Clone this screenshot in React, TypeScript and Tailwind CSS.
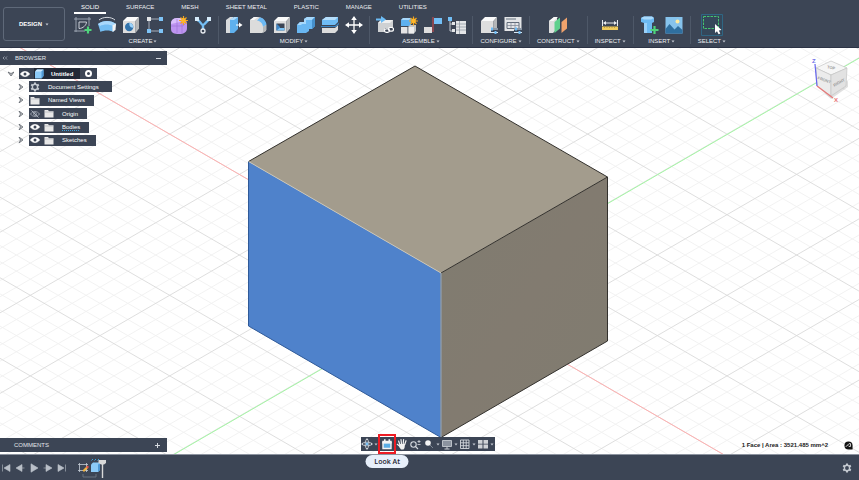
import React from 'react';

const TABS = ['SOLID', 'SURFACE', 'MESH', 'SHEET METAL', 'PLASTIC', 'MANAGE', 'UTILITIES'];

function Svg({ children, className = 'w-[18px] h-[18px]', box = '0 0 18 18' }: { children: React.ReactNode; className?: string; box?: string }) {
  return (
    <svg viewBox={box} className={`shrink-0 ${className}`} fill="none" aria-hidden="true">
      {children}
    </svg>
  );
}

function Caret() {
  return (
    <Svg box="0 0 4 3" className="w-[4px] h-[3px]">
      <path d="M0.5 0.5h3L2 2.5z" fill="#c5cad3" />
    </Svg>
  );
}

/* ── Toolbar icons ── */

const SketchIcon = () => (
  <Svg>
    <path d="M2 1v15M15 1v9M0 3h17M0 15h11" stroke="#9aa3b0" strokeWidth="1" />
    <path d="M5 12.500V6h7.500C12.500 9 9 12.500 5 12.500z" stroke="#c9ced6" strokeWidth="1" />
    <path d="M14 10.500v7M10.500 14h7" stroke="#4fd57c" strokeWidth="2.200" />
  </Svg>
);

const FormIcon = () => (
  <Svg>
    <path d="M1 4C5 .5 13 .5 17 4" stroke="#d5d9df" strokeWidth="1" />
    <path d="M0 8c5-4 13-4 18 0l-2.500 8c-3-2-10-2-13 0z" fill="#74bdf2" />
    <path d="M0 8c5-4 13-4 18 0l-3 2C11 8 6 8 2 10z" fill="#a9d8fb" />
    <path d="M18 7.500l-3.500 2V16l3-2z" fill="#f3f3f3" />
  </Svg>
);

const BoxBase = () => (
  <>
    <path d="M1 5l4-4h12l-3.500 4z" fill="#fafafa" />
    <path d="M1 5h12.500v12H1z" fill="#dedede" />
    <path d="M13.500 5L17 1v11.500L13.500 17z" fill="#b4b6b8" />
  </>
);

const HoleIcon = () => (
  <Svg>
    <BoxBase />
    <circle cx="7.200" cy="11" r="4.200" fill="#3273ab" />
    <path d="M7.500 6.800a4.200 4.200 0 0 1 3.800 4.800c-3 .4-4.400-2-3.800-4.800z" fill="#9cd3fb" />
  </Svg>
);

const PatternIcon = () => (
  <Svg>
    <path d="M5 3h9M3 5v10h10" stroke="#a7afbb" strokeWidth="1" />
    <path d="M1 1h4v4H1z" fill="#e4e6e9" />
    <path d="M13 1h4v4h-4zM1 13h4v4H1zM13 13h4v4h-4z" fill="#7ec4f7" />
  </Svg>
);

const Spark = ({ x, y }: { x: number; y: number }) => (
  <g transform={`translate(${x} ${y})`}>
    <path d="M0-4.500V4.500M-4.500 0H4.500M-3-3L3 3M3-3L-3 3" stroke="#f3a41c" strokeWidth="1.200" />
    <circle r="2.400" fill="#fdb62a" />
  </g>
);

const MeshFormIcon = () => (
  <Svg>
    <path d="M1 8C1 3 4 2 9 2s8 2 8 6v4c0 4-3 6-8 6s-8-1-8-5z" fill="#bd94f0" />
    <path d="M1 8C1 3 4 2 9 2h4l-3 4z" fill="#d9bffb" />
    <path d="M7 3v14M1 10h12l3-3M12 6v11" stroke="#9a6fd3" strokeWidth=".6" />
    <Spark x={13.500} y={4.500} />
  </Svg>
);

const BranchIcon = () => (
  <Svg>
    <path d="M3 4c3 0 4 5 6 5s4-5 6-5M9 9v6" stroke="#74bdf2" strokeWidth="2.400" />
    <path d="M1 1h4v4H1zM13 1h4v4h-4z" fill="#d6ebfa" />
    <circle cx="9" cy="15" r="2" fill="#3c4555" stroke="#e9edf2" strokeWidth="1.300" />
  </Svg>
);

const PressPullIcon = () => (
  <Svg>
    <path d="M1 4l4-3h3v13l-3 3H1z" fill="#d9dbdd" />
    <path d="M5 4l4-3h4v12l-4 4H5z" fill="#5fb1ee" />
    <path d="M5 4l4-3h4l-4 3z" fill="#b0dcfb" />
    <path d="M11 9h4" stroke="#fff" strokeWidth="1" />
    <path d="M14 6.500L17.500 9 14 11.500z" fill="#fff" />
  </Svg>
);

const FilletIcon = () => (
  <Svg>
    <path d="M1 4l4-3h4c4 0 8 4 8 9v5l-4 2H1z" fill="#dcdcdc" />
    <path d="M1 4l4-3h4L5 4z" fill="#f8f8f8" />
    <path d="M8 4.500L11 1.500c3.500.5 6 3.500 6.500 7L14 11c0-3-2.500-6-6-6.500z" fill="#6cb9f3" />
    <path d="M14 11l3.500-2.500V14L14 17z" fill="#b4b6b8" />
  </Svg>
);

const ShellIcon = () => (
  <Svg>
    <BoxBase />
    <path d="M3.500 7.500h8v7h-8z" fill="#3c4555" />
    <path d="M3.500 14.500v-7L7 11v1.500z" fill="#3f86c6" />
    <path d="M3.500 14.500L6.500 12h5v2.500z" fill="#7cc3f6" />
  </Svg>
);

const CombineIcon = () => (
  <Svg>
    <path d="M0 9l3-3h4V3l3-2h8v9l-3 3h-3v2l-3 2H0z" fill="#69b7f2" />
    <path d="M0 9l3-3h4V3l3-2h8l-3 3H9v4H5L4 9z" fill="#a6d8fc" />
    <path d="M15 4l3-3v9l-3 3z" fill="#458fcb" />
  </Svg>
);

const SplitIcon = () => (
  <Svg>
    <path d="M1 4l4-3h12v5l-3 3H1z" fill="#6fbcf5" />
    <path d="M1 4l4-3h12l-3 3z" fill="#b5defc" />
    <path d="M1 12h13l3-3v5l-3 3H1z" fill="#dcdcdc" />
    <path d="M0 10.500h14.500L18 7.500" stroke="#3a82c0" strokeWidth="1.200" />
  </Svg>
);

const MoveIcon = () => (
  <Svg>
    <path d="M9 2v14M2 9h14" stroke="#fff" strokeWidth="1.300" />
    <path d="M9 0l2.800 4H6.200zM9 18l2.800-4H6.200zM0 9l4-2.800v5.600zM18 9l-4-2.800v5.600z" fill="#fff" />
  </Svg>
);

const InsertLinkIcon = () => (
  <Svg>
    <path d="M2 7l3-3h12v9l-4 3H2z" fill="#cfd1d3" />
    <path d="M2 7l3-3h12l-3 3z" fill="#efefef" />
    <path d="M0 3.500h6" stroke="#6cbcf5" strokeWidth="2" />
    <path d="M5 0l5 3.500L5 7z" fill="#6cbcf5" />
    <path d="M9 12h9v5H9z" fill="#3c4555" />
    <rect x="8.500" y="12.800" width="5" height="3.600" rx="1.800" stroke="#fff" strokeWidth="1.200" />
    <rect x="12.500" y="11.500" width="5" height="3.600" rx="1.800" stroke="#fff" strokeWidth="1.200" />
  </Svg>
);

const ComponentIcon = () => (
  <Svg>
    <path d="M1 4l2-2h8v8H1z" fill="#5eb0ee" />
    <path d="M1 4l2-2h8L9 4z" fill="#a8d8fb" />
    <path d="M1 11h6.500v6.500H1z" fill="#e4e4e4" />
    <path d="M8.500 10.500L10 9h6v6l-2 2.500H8.500z" fill="#c4c6c8" />
    <path d="M8.500 11H14v6.500H8.500z" fill="#ededed" />
    <Spark x={13.500} y={5} />
  </Svg>
);

const JointIcon = () => (
  <Svg>
    <path d="M9 1v15" stroke="#d84b4b" strokeWidth="1" />
    <path d="M10 2h8v6h-8z" fill="#72bff6" />
    <path d="M0 11h8v6H0z" fill="#dedede" />
  </Svg>
);

const BomIcon = () => (
  <Svg>
    <path d="M0 1h4v4H0z" fill="#72bff6" />
    <path d="M2 5v10h4M2 8h4" stroke="#bfc5ce" strokeWidth="1" />
    <path d="M4 6h3v3H4zM4 13h3v3H4z" fill="#e4e6e8" />
    <path d="M8 5h10v13H8z" fill="#e4e6e8" />
    <path d="M8 8h10M8 11h10M8 14h10M11.500 5v13" stroke="#8b939f" strokeWidth=".7" />
  </Svg>
);

const Sliders = () => (
  <>
    <path d="M10 13h8M10 16.500h8" stroke="#d8e8f5" strokeWidth="1" />
    <path d="M12 11.500v3M15.500 15v3" stroke="#6cbcf5" strokeWidth="2" />
  </>
);

const ConfigureIcon = () => (
  <Svg>
    <BoxBase />
    <path d="M11 12h7v6h-7z" fill="#3c4555" />
    <Sliders />
  </Svg>
);

const ConfigTableIcon = () => (
  <Svg>
    <path d="M.5 1h17v14H.5z" fill="#e3e5e7" />
    <path d="M2 3h10" stroke="#7b8492" strokeWidth="1.200" />
    <path d="M3 6.500h12v6H3z" stroke="#545e6d" strokeWidth=".9" />
    <path d="M3 9.500h12M7 6.500v6M11 6.500v6" stroke="#7b8492" strokeWidth=".7" />
    <path d="M10 12h8v6h-8z" fill="#3c4555" />
    <Sliders />
  </Svg>
);

const PlaneIcon = () => (
  <Svg>
    <path d="M0 5l5-4h3v12l-4 4H0z" fill="#dedede" />
    <path d="M0 5l5-4h4L4.500 5z" fill="#f9f9f9" />
    <path d="M5.500 6L11 1.500v11L5.500 17z" fill="#5fd08d" />
    <path d="M12.500 6L18 1.500v11L12.500 17z" fill="#f0a26c" />
  </Svg>
);

const MeasureIcon = () => (
  <Svg>
    <path d="M1.500 4v6M16.500 4v6M3 7h12" stroke="#e9ebee" strokeWidth="1" />
    <path d="M5 5L2 7l3 2zM13 5l3 2-3 2z" fill="#e9ebee" />
    <path d="M1 10.500h16V14H1z" fill="#f0cb5b" />
    <path d="M3.500 10.500V12M6 10.500V12M8.500 10.500V12M11 10.500V12M13.500 10.500V12" stroke="#a98a33" strokeWidth=".7" />
  </Svg>
);

const BoltIcon = () => (
  <Svg>
    <path d="M0 2l3-1.500h8L13 2v4l-2 1v10H3V7L0 6z" fill="#6cbaf3" />
    <path d="M0 2l3-1.500h8L13 2l-3 1.500H3z" fill="#a9dafc" />
    <path d="M3 7h3v10H3z" fill="#9ad1fa" />
    <path d="M13.500 10v8M9.500 14h8" stroke="#4fd57c" strokeWidth="2.200" />
  </Svg>
);

const CanvasImageIcon = () => (
  <Svg>
    <path d="M.5 1h17v16.500H.5z" fill="#86c3ec" />
    <circle cx="12.500" cy="5.500" r="2" fill="#fdeaa0" />
    <path d="M.5 17.500V13l4-5 5 5.500L13 10l4.500 4v3.500z" fill="#2f6f9f" />
  </Svg>
);

const SelectIcon = () => (
  <Svg box="0 0 22 22" className="w-[22px] h-[22px]">
    <path d="M.5.5h21v21H.5z" fill="#35475a" stroke="#2f6683" strokeWidth="1" />
    <path d="M2.500 2.500h15v12h-15z" stroke="#45c46f" strokeWidth="1" strokeDasharray="2.500 1" />
    <path d="M14 10v9l2-1.800 1.600 3 1.700-.8-1.500-3 2.700-.3z" fill="#fff" />
  </Svg>
);

type Group = { label: string; icons: React.FC[]; wide?: boolean };

const GROUPS: Group[] = [
  { label: 'CREATE', icons: [SketchIcon, FormIcon, HoleIcon, PatternIcon, MeshFormIcon, BranchIcon] },
  { label: 'MODIFY', icons: [PressPullIcon, FilletIcon, ShellIcon, CombineIcon, SplitIcon, MoveIcon] },
  { label: 'ASSEMBLE', icons: [InsertLinkIcon, ComponentIcon, JointIcon, BomIcon] },
  { label: 'CONFIGURE', icons: [ConfigureIcon, ConfigTableIcon], wide: true },
  { label: 'CONSTRUCT', icons: [PlaneIcon], wide: true },
  { label: 'INSPECT', icons: [MeasureIcon], wide: true },
  { label: 'INSERT', icons: [BoltIcon, CanvasImageIcon], wide: true },
  { label: 'SELECT', icons: [SelectIcon], wide: true },
];

function Toolbar() {
  return (
    <header className="flex h-12 shrink-0 border-b border-[#2c3345] bg-[#3c4555]">
      <button className="mt-[7px] ml-[3px] flex h-[34px] w-[62px] shrink-0 items-center justify-center gap-[3px] rounded-[3px] border border-[#5f6979] text-[6px] font-bold text-white">
        DESIGN <Caret />
      </button>
      <div className="ml-[3px] flex min-w-0 flex-1 flex-col">
        <nav className="flex h-[14px] gap-[13px] pl-[6px]">
          {TABS.map((tab, i) => (
            <button
              key={tab}
              className={
                i === 0
                  ? 'border-b-2 border-white px-[7px] pt-px whitespace-nowrap text-white'
                  : 'border-b-2 border-transparent px-[7px] pt-px whitespace-nowrap text-[#eceef1]'
              }
            >
              {tab}
            </button>
          ))}
        </nav>
        <div className="flex pt-[2px]">
          {GROUPS.map((g, i) => (
            <div key={g.label} className="flex">
              <section className={`flex flex-col items-center ${g.wide ? 'px-[7px]' : 'px-[6px]'}`}>
                <div className="flex h-[18px] items-center gap-[6px]">
                  {g.icons.map((Icon, n) => (
                    <button key={n} aria-label={`${g.label} ${n + 1}`}>
                      <Icon />
                    </button>
                  ))}
                </div>
                <button className="mt-[2px] flex h-[10px] items-center gap-px text-[#eceef1]">
                  {g.label}
                  <Caret />
                </button>
              </section>
              {i < GROUPS.length - 1 && <div className="h-7 w-px bg-[#4e5868]" />}
            </div>
          ))}
        </div>
      </div>
    </header>
  );
}

/* ── Browser tree ── */

function Eye({ off }: { off?: boolean }) {
  return (
    <Svg box="0 0 10 8" className="w-[10px] h-[8px]">
      <path d="M.5 4C2.500.8 7.500.8 9.500 4 7.500 7.200 2.500 7.200.5 4z" fill={off ? 'none' : '#fff'} stroke={off ? '#aab1bc' : '#fff'} strokeWidth=".8" />
      <circle cx="5" cy="4" r="1.500" fill={off ? 'none' : '#3c4555'} stroke={off ? '#aab1bc' : 'none'} strokeWidth=".7" />
      {off && <path d="M1.500.5l7 7" stroke="#aab1bc" strokeWidth="1" />}
    </Svg>
  );
}

const Folder = () => (
  <Svg box="0 0 10 9" className="w-[10px] h-[9px]">
    <path d="M.5 1h3.500l1 1.200h4.500V8.500h-9z" fill="#e7e7e7" />
    <path d="M.5 3h9" stroke="#a9adb4" strokeWidth=".6" />
  </Svg>
);

const Gear = ({ className }: { className: string }) => (
  <Svg box="0 0 24 24" className={className}>
    <path
      d="M9.800 1h4.400l.7 3.200 2 1.200 3.200-1 2.200 3.800-2.500 2.200v3.200l2.500 2.200-2.200 3.800-3.200-1-2 1.200-.7 3.200H9.800l-.7-3.200-2-1.200-3.200 1L1.700 15.800l2.500-2.200v-3.200L1.700 8.200l2.200-3.800 3.200 1 2-1.200z"
      fill="#c4c9d0"
    />
    <circle cx="12" cy="12" r="4.600" fill="#3c4555" />
  </Svg>
);

const BlueBox = () => (
  <Svg box="0 0 10 10" className="w-[10px] h-[10px]">
    <path d="M1 2.500L3 .5h6.500v6.500L7.500 9.500H1z" fill="#8ccbf8" />
    <path d="M1 2.500L3 .5h6.500l-2 2z" fill="#c8e7fd" />
    <path d="M7.500 2.500l2-2V7l-2 2.500z" fill="#4f9ad6" />
  </Svg>
);

function Arrow({ open }: { open?: boolean }) {
  return (
    <Svg box="0 0 6 6" className="w-[6px] h-[6px]">
      <path d={open ? 'M0 1l3 4 3-4-3 1.500z' : 'M1 0l4 3-4 3 1.500-3z'} fill="#b9bcc1" stroke="#555a62" strokeWidth=".7" />
    </Svg>
  );
}

const NODES = [
  { name: 'Document Settings', kind: 'settings' },
  { name: 'Named Views', kind: 'views' },
  { name: 'Origin', kind: 'hidden' },
  { name: 'Bodies', kind: 'active' },
  { name: 'Sketches', kind: 'visible' },
];

function Browser() {
  return (
    <aside className="w-[167px]">
      <div className="flex h-[14px] items-center bg-[#3c4555] pr-[6px] pl-[2px] text-[#e3e6ea]">
        <Svg box="0 0 6 4" className="h-[4px] w-[6px]">
          <path d="M2.500.5L1 2l1.500 1.500M5 .5L3.500 2 5 3.500" stroke="#aab1bc" strokeWidth=".8" />
        </Svg>
        <h2 className="ml-[7px] flex-1">BROWSER</h2>
        <button aria-label="Collapse browser" className="h-px w-[5px] bg-[#d5d9df]" />
      </div>
      <ul className="mt-[3px] flex h-[78px] flex-col justify-between text-white">
        <li className="flex items-center pl-2">
          <Arrow open />
          <div className="ml-[5px] flex h-[11px] items-center bg-[#3c4555] pl-px">
            <Eye />
            <div className="ml-1 flex h-full items-center bg-[#222936]">
              <BlueBox />
              <span className="px-[7px] font-bold">Untitled</span>
            </div>
            <label className="flex h-full items-center px-[5px]">
              <input
                type="radio"
                defaultChecked
                aria-label="Activate Untitled"
                className="h-[7px] w-[7px] appearance-none rounded-full border-2 border-white bg-[#3c4555]"
              />
            </label>
          </div>
        </li>
        {NODES.map((node) => (
          <li key={node.name} className="flex items-center pl-[18px]">
            <Arrow />
            <div
              className={`ml-[5px] flex h-[11px] items-center bg-[#3c4555] pl-px ${node.kind === 'settings' ? 'pr-[13px]' : 'pr-[9px]'}`}
            >
              {node.kind === 'settings' && <Gear className="h-[10px] w-[10px]" />}
              {node.kind === 'views' && <Folder />}
              {(node.kind === 'hidden' || node.kind === 'active' || node.kind === 'visible') && (
                <span className="flex items-center gap-1">
                  <Eye off={node.kind === 'hidden'} />
                  <Folder />
                </span>
              )}
              <span
                className={
                  node.kind === 'active'
                    ? 'ml-2 whitespace-nowrap underline decoration-[#3fa4dd] decoration-dotted'
                    : 'ml-2 whitespace-nowrap'
                }
              >
                {node.name}
              </span>
            </div>
          </li>
        ))}
      </ul>
    </aside>
  );
}

/* ── 3D viewport ── */

function Scene() {
  // every fifth line is a major one; lines are 16.12 apart vertically
  const step = 16.12;
  const slope = 0.5785;
  const minor: string[] = [];
  const major: string[] = [];
  for (let k = -60; k <= 60; k++) {
    const y = 174.4 + k * step;
    const list = k % 5 === 0 ? major : minor;
    list.push(`M-400 ${y - 500 * slope}L1300 ${y + 1200 * slope}`);
    list.push(`M-400 ${y + 500 * slope}L1300 ${y - 1200 * slope}`);
  }
  return (
    <svg className="absolute inset-0 h-full w-full" viewBox="0 48 859 406" preserveAspectRatio="xMidYMid slice" fill="none" aria-hidden="true">
      <defs>
        <linearGradient id="side" x1="0" y1="0" x2="1" y2="1">
          <stop offset="0" stopColor="#807c70" />
          <stop offset=".5" stopColor="#827b70" />
          <stop offset="1" stopColor="#807c70" />
        </linearGradient>
      </defs>
      <path d={minor.join('')} stroke="#f0f0f0" strokeWidth=".9" />
      <path d={major.join('')} stroke="#dadada" strokeWidth=".9" />
      <path d="M0 36L859 532.900" stroke="#ffb0b0" />
      <path d="M0 555.100L859 58.200" stroke="#a5f7a5" />
      <path d="M415 66L607.500 177 441 273 248.500 161.500z" fill="#a39c8d" />
      <path d="M441 273l166.500-96v164L441 437.500z" fill="url(#side)" />
      <path d="M248.500 161.500L441 273v164.500L248.500 326z" fill="#4f82cb" />
      <path d="M248.500 161.500L415 66l192.500 111v164L441 437.500M441 273l166.500-96" stroke="#33312d" />
      <path d="M248.500 161.500V326L441 437.500V273" stroke="#2f5a99" />
      <path d="M248.500 161.500L441 273v164" stroke="#d8cdb4" strokeWidth=".8" />
    </svg>
  );
}

function ViewCube() {
  return (
    <svg viewBox="0 0 40 50" className="h-[50px] w-[40px]" fontWeight="bold" fill="#999" aria-label="View cube">
      <path d="M10 32l12 11 17-12v-6z" fill="#000" opacity=".12" />
      <path d="M7 12l15-7 16 7-16 7z" fill="#f6f6f6" stroke="#c4c4c4" strokeWidth=".7" />
      <path d="M7 12l15 7v21L8 30z" fill="#ececec" stroke="#c4c4c4" strokeWidth=".7" />
      <path d="M22 19l16-7-1 18-15 10z" fill="#e2e2e2" stroke="#c4c4c4" strokeWidth=".7" />
      <path d="M8 30L6 8" stroke="#6464ee" strokeWidth="1.200" />
      <path d="M8 30l16 12" stroke="#e87878" strokeWidth="1.200" />
      <text x="18" y="13" fontSize="4" transform="rotate(10 22 12)">TOP</text>
      <text x="8" y="25" fontSize="4" transform="rotate(20 14 25)">FRONT</text>
      <text x="24" y="28" fontSize="4" transform="rotate(-28 30 27)">RIGHT</text>
      <text x="3" y="7" fontSize="6" fill="#6f6fe8">Z</text>
      <text x="25" y="46" fontSize="6" fill="#ea7474">X</text>
    </svg>
  );
}

/* ── Navigation bar ── */

const OrbitIcon = () => (
  <Svg box="0 0 12 12" className="h-3 w-3">
    <ellipse cx="6" cy="6" rx="4.600" ry="1.900" stroke="#cfd4db" strokeWidth=".8" />
    <ellipse cx="6" cy="6" rx="1.900" ry="4.600" stroke="#cfd4db" strokeWidth=".8" />
    <path d="M6 0l1.500 2h-3zM6 12l1.500-2h-3zM0 6l2-1.500v3zM12 6l-2-1.500v3z" fill="#cfd4db" />
    <circle cx="6" cy="6" r="1.400" fill="#7cc3f6" />
  </Svg>
);

const NAV_MENUS = [
  {
    name: 'Zoom window',
    icon: (
      <Svg box="0 0 12 12" className="h-3 w-3">
        <circle cx="5" cy="5" r="2.800" fill="#f4f4f4" />
        <path d="M7 7l3 3" stroke="#7e8794" strokeWidth="1" />
      </Svg>
    ),
  },
  {
    name: 'Display settings',
    icon: (
      <Svg box="0 0 12 12" className="h-3 w-3">
        <path d="M1.500 2.500h9v6h-9z" fill="#8b939f" stroke="#c4c9d0" strokeWidth=".9" />
        <path d="M6 8.500V11M3.500 11h5" stroke="#c4c9d0" strokeWidth="1" />
      </Svg>
    ),
  },
  {
    name: 'Grid and snaps',
    icon: (
      <Svg box="0 0 12 12" className="h-3 w-3">
        <path d="M1.500 2h8.500v8.500H1.500zM4.300 2v8.500M7.200 2v8.500M1.500 4.800H10M1.500 7.700H10" stroke="#d5d9df" strokeWidth=".9" />
      </Svg>
    ),
  },
  {
    name: 'Viewports',
    icon: (
      <Svg box="0 0 12 12" className="h-3 w-3">
        <path d="M1 2h4.500v3.800H1zM6.500 2H11v3.800H6.500zM1 6.600h4.500v3.800H1zM6.500 6.600H11v3.800H6.500z" fill="#cfd2d6" />
      </Svg>
    ),
  },
];

function NavBar() {
  return (
    <div className="mr-[3px] flex h-[14px] w-[134px] items-center justify-between bg-[#3c4555]">
      <button aria-label="Orbit" className="flex w-[18px] items-center gap-px">
        <OrbitIcon />
        <Caret />
      </button>
      <div className="relative flex w-[16px] justify-center">
        <button aria-label="Look At">
          <Svg box="0 0 12 12" className="h-3 w-3">
            <path d="M2 4.500h8v6H2z" fill="#5aaee6" stroke="#f4f4f4" strokeWidth="1.400" />
            <path d="M1.300 2.800h9.400v2.700H1.300zM3 1.300h1.600v2H3zM7.500 1.300h1.600v2H7.500z" fill="#f4f4f4" />
          </Svg>
        </button>
        <div className="pointer-events-none absolute -inset-x-px -top-[4px] h-5 border-2 border-[#ed1c24]" />
        <div
          role="tooltip"
          className="absolute top-[17px] left-1/2 z-20 flex h-[13px] w-[43px] -translate-x-1/2 items-center justify-center rounded-full bg-[#e7effa] font-['Open_Sans',sans-serif] text-[7px] font-semibold whitespace-nowrap text-[#1d2430]"
        >
          Look At
        </div>
      </div>
      <button aria-label="Pan" className="flex w-[13px] justify-center">
        <Svg box="0 0 12 12" className="h-3 w-3">
          <path d="M4 7L2.600 3M5.500 6L5 1.500M7.200 6l.4-4.500M8.700 6.500l1.300-3.800M4 8.500L1.300 6.300" stroke="#f2f2f2" strokeWidth="1.200" strokeLinecap="round" />
          <path d="M3.500 6h5.600l-.6 4-1 1.500H5L3.200 9z" fill="#f2f2f2" />
        </Svg>
      </button>
      <button aria-label="Zoom" className="flex w-[14px] justify-center">
        <Svg box="0 0 12 12" className="h-3 w-3">
          <circle cx="4.500" cy="6.500" r="2.700" stroke="#d5d9df" strokeWidth="1.100" />
          <path d="M6.500 8.500L9 11" stroke="#d5d9df" strokeWidth="1.100" />
          <path d="M8.500 3.500h3M10 2v3M8.500 6.500h3" stroke="#d5d9df" strokeWidth=".8" />
        </Svg>
      </button>
      {NAV_MENUS.map((m) => (
        <button key={m.name} aria-label={m.name} className="flex w-[18px] items-center gap-px">
          {m.icon}
          <Caret />
        </button>
      ))}
    </div>
  );
}

/* ── Timeline ── */

const PLAYBACK = [
  { name: 'Start', d: 'M1.500 1.500v7M9 1.500v7L3 5z' },
  { name: 'Step back', d: 'M7 1.500v7L1 5zM7 5h2.500' },
  { name: 'Play', d: 'M2 .8v8.400L9 5z' },
  { name: 'Step forward', d: 'M3 1.500v7L9 5zM.5 5H3' },
  { name: 'End', d: 'M8.500 1.500v7M1 1.500v7L7 5z' },
];

function Timeline() {
  return (
    <footer className="flex h-[26px] shrink-0 items-center border-t border-[#8d94a0] bg-[#3c4555] pr-[7px] pl-px">
      <div className="flex gap-1">
        {PLAYBACK.map((p) => (
          <button key={p.name} aria-label={p.name}>
            <Svg box="0 0 10 10" className="h-[10px] w-[10px]">
              <path d={p.d} fill="#b9bfc8" stroke="#b9bfc8" strokeWidth=".6" />
            </Svg>
          </button>
        ))}
      </div>
      <svg viewBox="0 0 32 22" className="ml-[9px] h-[22px] w-8" fill="none" aria-label="Timeline features">
        <path d="M3.500 6v9M10.500 6v9M2 7.500h10M2 13.500h10" stroke="#c4cbd5" strokeWidth=".8" />
        <path d="M6.500 13.500l4-4 1.500 1.500-4 4z" fill="#f1b340" />
        <path d="M10 10l1.500-1.500 1.500 1.500-1.500 1.500z" fill="#e4534d" />
        <path d="M15 7.500l2-2h7v7.500l-2 2h-7z" fill="#8ccbf8" />
        <path d="M22 7.500l2-2V13l-2 2z" fill="#4f9ad6" />
        <path d="M15.500 3.500L17 2M18.500 3.500L20 2M21.500 3.500L23 2" stroke="#3fa4dd" />
        <path d="M7 17v3h13v-3" stroke="#6d7685" strokeWidth=".9" />
        <path d="M22.500 3h7.500v3L28 7.500h-3L22.500 6z" fill="#d9d9d9" />
        <path d="M26.500 6v15" stroke="#d9d9d9" strokeWidth="1.400" />
      </svg>
      <button aria-label="Timeline settings" className="ml-auto">
        <Gear className="h-[10px] w-[10px]" />
      </button>
    </footer>
  );
}

export default function App() {
  return (
    <div className="flex h-screen flex-col overflow-hidden bg-white font-['Liberation_Sans',Arial,sans-serif] text-[6px] leading-[10px]">
      <Toolbar />
      <main className="relative z-10 flex min-h-0 flex-1 flex-col">
        <Scene />
        <div className="relative flex flex-1 items-start justify-between pt-[3px]">
          <Browser />
          <div className="mt-[5px] mr-[10px]">
            <ViewCube />
          </div>
        </div>
        <div className="relative grid h-[17px] grid-cols-3 items-start">
          <button className="mt-px flex h-[14px] w-[167px] items-center justify-between bg-[#3c4555] pr-[7px] pl-[14px] text-[#e3e6ea]">
            COMMENTS
            <Svg box="0 0 5 5" className="h-[5px] w-[5px]">
              <path d="M2.500 0v5M0 2.500h5" stroke="#d5d9df" />
            </Svg>
          </button>
          <div className="flex justify-center">
            <NavBar />
          </div>
          <div className="mt-[3px] flex items-center justify-end gap-4 pr-[6px] font-bold text-[#222]">
            <span>1 Face | Area : 3521.485 mm^2</span>
            <Svg box="0 0 10 10" className="h-[9px] w-[9px]">
              <path d="M5 .5a4.500 4.500 0 0 1 4.500 4.500v4.500H5a4.500 4.500 0 0 1 0-9z" fill="#111" />
              <path d="M2 6.500L5.500 3h1.800v3H5.500l-1-1" stroke="#fff" strokeWidth=".9" />
            </Svg>
          </div>
        </div>
      </main>
      <Timeline />
    </div>
  );
}
